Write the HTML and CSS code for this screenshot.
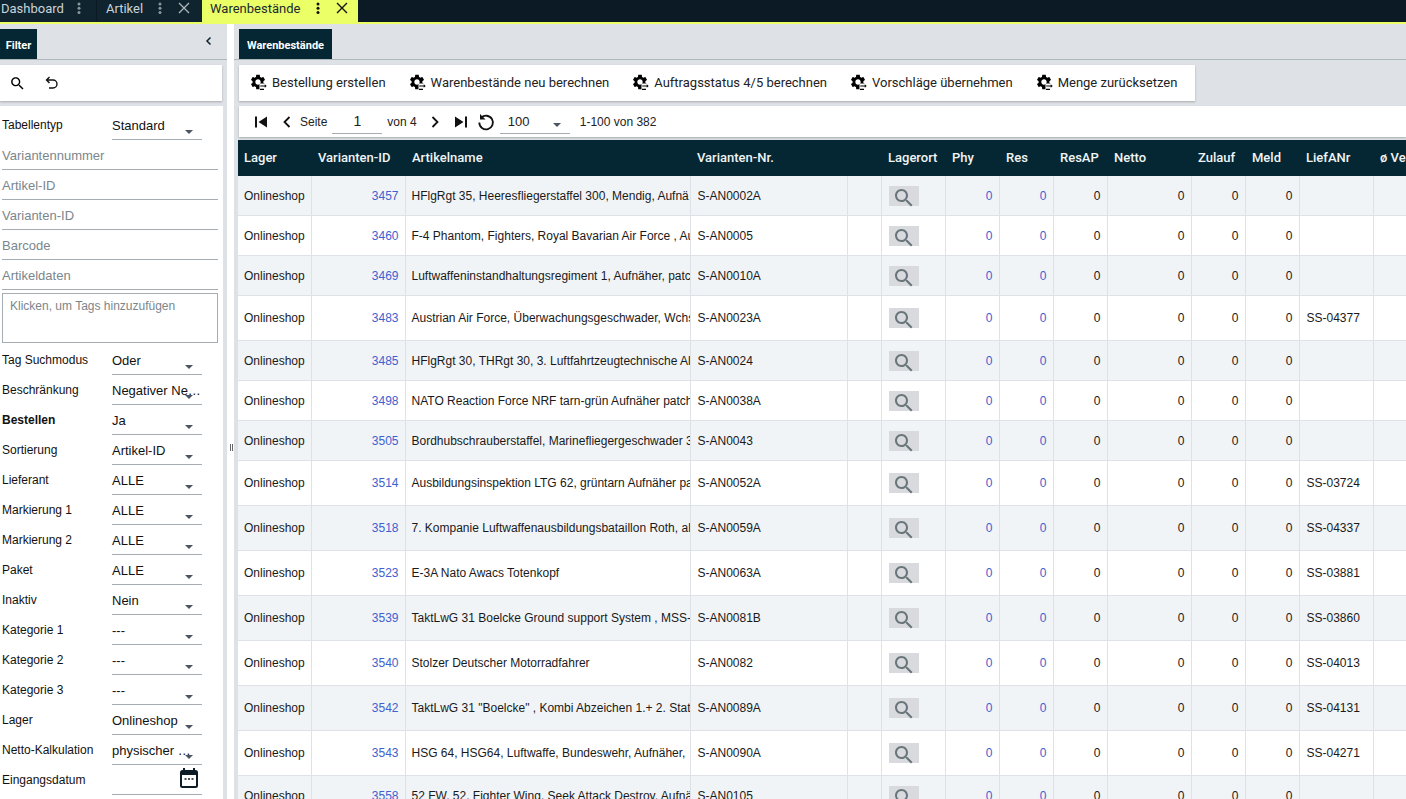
FILE: index.html
```html
<!DOCTYPE html>
<html>
<head>
    <meta name="viewport" content="width=device-width, initial-scale=1">
    <title>Warenbestände</title>
    <link rel="stylesheet" href="styles.css">
</head>

<body>
    <svg class="iconDefs" width="0" height="0">
        <symbol id="gear" viewBox="0 0 24 24">
            <path d="M19.14 12.94c.04-.3.06-.61.06-.94 0-.32-.02-.64-.07-.94l2.03-1.58c.18-.14.23-.41.12-.61l-1.92-3.32c-.12-.22-.37-.29-.59-.22l-2.39.96c-.5-.38-1.03-.7-1.62-.94l-.36-2.54c-.04-.24-.24-.41-.48-.41h-3.84c-.24 0-.43.17-.47.41l-.36 2.54c-.59.24-1.13.57-1.62.94l-2.39-.96c-.22-.08-.47 0-.59.22L2.74 8.87c-.12.21-.08.47.12.61l2.03 1.58c-.05.3-.09.63-.09.94s.02.64.07.94l-2.03 1.58c-.18.14-.23.41-.12.61l1.92 3.32c.12.22.37.29.59.22l2.39-.96c.5.38 1.03.7 1.62.94l.36 2.54c.05.24.24.41.48.41h3.84c.24 0 .44-.17.47-.41l.36-2.54c.59-.24 1.13-.56 1.62-.94l2.39.96c.22.08.47 0 .59-.22l1.92-3.32c.12-.22.07-.47-.12-.61l-2.01-1.58zM12 15.6c-1.98 0-3.6-1.62-3.6-3.6s1.62-3.6 3.6-3.6 3.6 1.62 3.6 3.6-1.62 3.6-3.6 3.6z" />
            <rect x="14" y="14" width="10" height="10" fill="#fff" />
            <path d="M15 16.5h6v-1.6l2.6 2.4-2.6 2.4v-1.6h-6zM14.5 21h5.5v1.5h-5.5z" />
        </symbol>
        <symbol id="lens" viewBox="0 0 24 24">
            <path d="M15.5 14h-.79l-.28-.27C15.41 12.59 16 11.11 16 9.5 16 5.91 13.09 3 9.5 3S3 5.91 3 9.5 5.91 16 9.5 16c1.61 0 3.09-.59 4.23-1.57l.27.28v.79l5 4.99L20.49 19l-4.99-5zm-6 0C7.01 14 5 11.99 5 9.5S7.01 5 9.5 5 14 7.01 14 9.5 11.99 14 9.5 14z" />
        </symbol>
        <symbol id="cross" viewBox="0 0 12 12">
            <path d="M1 1l10 10M11 1 1 11" fill="none" stroke="currentColor" stroke-width="1.4" />
        </symbol>
        <symbol id="kebab" viewBox="0 0 10 14">
            <circle cx="5" cy="3" r="1.5" />
            <circle cx="5" cy="7.2" r="1.5" />
            <circle cx="5" cy="11.4" r="1.5" />
        </symbol>
    </svg>

    <div class="tabBar">
        <div class="appTab firstTab"><span>Dashboard</span><svg class="dots" width="10" height="14"><use href="#kebab" /></svg></div>
        <div class="appTab secondTab"><span>Artikel</span><svg class="dots" width="10" height="14"><use href="#kebab" /></svg><svg class="closeX" width="12" height="12"><use href="#cross" /></svg></div>
        <div class="appTab activeTab"><span>Warenbestände</span><svg class="dots" width="10" height="14"><use href="#kebab" /></svg><svg class="closeX" width="12" height="12"><use href="#cross" /></svg></div>
    </div>

    <div class="workArea">
        <aside class="filterPanel">
            <div class="panelHead">
                <div class="panelTab">Filter</div>
                <svg class="collapseIcon" width="10" height="10" viewBox="0 0 10 10"><path d="M6.5 1.5 3 5l3.5 3.5" fill="none" stroke="#0d2430" stroke-width="1.5" /></svg>
            </div>
            <div class="filterTools">
                <svg class="toolIcon" width="17" height="17"><use href="#lens" /></svg>
                <svg class="toolIcon" width="16" height="16" viewBox="0 0 16 16"><path d="M4 5h6a3.5 3.5 0 0 1 0 8H6M6.5 2 3.5 5l3 3" fill="none" stroke="#111" stroke-width="1.4" /></svg>
            </div>
            <div class="filterForm">
                <div class="formRow"><label>Tabellentyp</label><div class="pick"><span class="pickText">Standard</span><i class="arrow"></i></div></div>
                <div class="textField">Variantennummer</div>
                <div class="textField">Artikel-ID</div>
                <div class="textField">Varianten-ID</div>
                <div class="textField">Barcode</div>
                <div class="textField">Artikeldaten</div>
                <div class="tagBox">Klicken, um Tags hinzuzufügen</div>
                <div class="formRow"><label>Tag Suchmodus</label><div class="pick"><span class="pickText">Oder</span><i class="arrow"></i></div></div>
                <div class="formRow"><label>Beschränkung</label><div class="pick"><span class="pickText">Negativer Ne…</span><i class="arrow"></i></div></div>
                <div class="formRow"><label class="strong">Bestellen</label><div class="pick"><span class="pickText">Ja</span><i class="arrow"></i></div></div>
                <div class="formRow"><label>Sortierung</label><div class="pick"><span class="pickText">Artikel-ID</span><i class="arrow"></i></div></div>
                <div class="formRow"><label>Lieferant</label><div class="pick"><span class="pickText">ALLE</span><i class="arrow"></i></div></div>
                <div class="formRow"><label>Markierung 1</label><div class="pick"><span class="pickText">ALLE</span><i class="arrow"></i></div></div>
                <div class="formRow"><label>Markierung 2</label><div class="pick"><span class="pickText">ALLE</span><i class="arrow"></i></div></div>
                <div class="formRow"><label>Paket</label><div class="pick"><span class="pickText">ALLE</span><i class="arrow"></i></div></div>
                <div class="formRow"><label>Inaktiv</label><div class="pick"><span class="pickText">Nein</span><i class="arrow"></i></div></div>
                <div class="formRow"><label>Kategorie 1</label><div class="pick"><span class="pickText">---</span><i class="arrow"></i></div></div>
                <div class="formRow"><label>Kategorie 2</label><div class="pick"><span class="pickText">---</span><i class="arrow"></i></div></div>
                <div class="formRow"><label>Kategorie 3</label><div class="pick"><span class="pickText">---</span><i class="arrow"></i></div></div>
                <div class="formRow"><label>Lager</label><div class="pick"><span class="pickText">Onlineshop</span><i class="arrow"></i></div></div>
                <div class="formRow"><label>Netto-Kalkulation</label><div class="pick"><span class="pickText">physischer …</span><i class="arrow"></i></div></div>
                <div class="formRow"><label>Eingangsdatum</label><div class="pick">
                    <svg class="calIcon" width="20" height="22" viewBox="0 0 20 22"><path d="M5 1v4M15 1v4" stroke="#0d1b26" stroke-width="2" /><rect x="2" y="4" width="16" height="16" rx="1.5" fill="none" stroke="#0d1b26" stroke-width="2" /><rect x="2" y="4" width="16" height="4" fill="#0d1b26" /><path d="M5.5 12h2M9 12h2M12.5 12h2" stroke="#0d1b26" stroke-width="1.5" /></svg>
                </div></div>
            </div>
        </aside>
        <div class="splitter"><span class="grip"></span></div>

        <main class="mainPanel">
            <div class="panelHead">
                <div class="panelTab mainTab">Warenbestände</div>
            </div>
            <div class="actionBar">
                <button type="button" class="actionBtn"><svg width="18" height="18"><use href="#gear" /></svg>Bestellung erstellen</button>
                <button type="button" class="actionBtn"><svg width="18" height="18"><use href="#gear" /></svg>Warenbestände neu berechnen</button>
                <button type="button" class="actionBtn"><svg width="18" height="18"><use href="#gear" /></svg>Auftragsstatus 4/5 berechnen</button>
                <button type="button" class="actionBtn"><svg width="18" height="18"><use href="#gear" /></svg>Vorschläge übernehmen</button>
                <button type="button" class="actionBtn"><svg width="18" height="18"><use href="#gear" /></svg>Menge zurücksetzen</button>
            </div>
            <div class="pagerBar">
                <svg class="firstIcon" width="14" height="14" viewBox="0 0 14 14"><path d="M1 1.5h2v11H1zM13 1.5v11L4.5 7z" fill="#111" /></svg>
                <svg class="prevIcon" width="10" height="14" viewBox="0 0 10 14"><path d="M7.5 2 2.5 7l5 5" fill="none" stroke="#111" stroke-width="1.8" /></svg>
                <span class="pageWord">Seite</span>
                <span class="pageInput">1</span>
                <span class="pageOf">von 4</span>
                <svg class="nextIcon" width="10" height="14" viewBox="0 0 10 14"><path d="M2.5 2l5 5-5 5" fill="none" stroke="#111" stroke-width="1.8" /></svg>
                <svg class="lastIcon" width="14" height="14" viewBox="0 0 14 14"><path d="M1 1.5v11L9.5 7zM11 1.5h2v11h-2z" fill="#111" /></svg>
                <svg class="reloadIcon" width="18" height="18" viewBox="0 0 18 18"><path d="M4.2 4.8A6.8 6.8 0 1 1 2.3 9.5" fill="none" stroke="#111" stroke-width="1.8" /><path d="M3 1v5.5h5.5z" fill="#111" /></svg>
                <div class="pick sizePick"><span class="pickText">100</span><i class="arrow"></i></div>
                <span class="pageCount">1-100 von 382</span>
            </div>

            <table class="stockTable">
                <colgroup>
                    <col class="w73"><col class="w94"><col class="w285"><col class="w157"><col class="w34"><col class="w64"><col class="w54"><col class="w54"><col class="w54"><col class="w84"><col class="w54"><col class="w54"><col class="w74"><col class="w60">
                </colgroup>
                <thead>
                    <tr><th>Lager</th><th>Varianten-ID</th><th>Artikelname</th><th>Varianten-Nr.</th><th></th><th>Lagerort</th><th>Phy</th><th>Res</th><th>ResAP</th><th>Netto</th><th>Zulauf</th><th>Meld</th><th>LiefANr</th><th>ø Ve</th></tr>
                </thead>
                <tbody>
                    <tr><td>Onlineshop</td><td class="num link">3457</td><td>HFlgRgt 35, Heeresfliegerstaffel 300, Mendig, Aufnä</td><td>S-AN0002A</td><td></td><td><span class="lookBtn"><svg width="24" height="24"><use href="#lens" /></svg></span></td><td class="num link">0</td><td class="num link">0</td><td class="num">0</td><td class="num">0</td><td class="num">0</td><td class="num">0</td><td></td><td></td></tr>
                    <tr><td>Onlineshop</td><td class="num link">3460</td><td>F-4 Phantom, Fighters, Royal Bavarian Air Force , Au</td><td>S-AN0005</td><td></td><td><span class="lookBtn"><svg width="24" height="24"><use href="#lens" /></svg></span></td><td class="num link">0</td><td class="num link">0</td><td class="num">0</td><td class="num">0</td><td class="num">0</td><td class="num">0</td><td></td><td></td></tr>
                    <tr><td>Onlineshop</td><td class="num link">3469</td><td>Luftwaffeninstandhaltungsregiment 1, Aufnäher, patc</td><td>S-AN0010A</td><td></td><td><span class="lookBtn"><svg width="24" height="24"><use href="#lens" /></svg></span></td><td class="num link">0</td><td class="num link">0</td><td class="num">0</td><td class="num">0</td><td class="num">0</td><td class="num">0</td><td></td><td></td></tr>
                    <tr class="tallRow"><td>Onlineshop</td><td class="num link">3483</td><td>Austrian Air Force, Überwachungsgeschwader, Wchs</td><td>S-AN0023A</td><td></td><td><span class="lookBtn"><svg width="24" height="24"><use href="#lens" /></svg></span></td><td class="num link">0</td><td class="num link">0</td><td class="num">0</td><td class="num">0</td><td class="num">0</td><td class="num">0</td><td>SS-04377</td><td></td></tr>
                    <tr><td>Onlineshop</td><td class="num link">3485</td><td>HFlgRgt 30, THRgt 30, 3. Luftfahrtzeugtechnische Al</td><td>S-AN0024</td><td></td><td><span class="lookBtn"><svg width="24" height="24"><use href="#lens" /></svg></span></td><td class="num link">0</td><td class="num link">0</td><td class="num">0</td><td class="num">0</td><td class="num">0</td><td class="num">0</td><td></td><td></td></tr>
                    <tr><td>Onlineshop</td><td class="num link">3498</td><td>NATO Reaction Force NRF tarn-grün Aufnäher patch</td><td>S-AN0038A</td><td></td><td><span class="lookBtn"><svg width="24" height="24"><use href="#lens" /></svg></span></td><td class="num link">0</td><td class="num link">0</td><td class="num">0</td><td class="num">0</td><td class="num">0</td><td class="num">0</td><td></td><td></td></tr>
                    <tr><td>Onlineshop</td><td class="num link">3505</td><td>Bordhubschrauberstaffel, Marinefliegergeschwader 3</td><td>S-AN0043</td><td></td><td><span class="lookBtn"><svg width="24" height="24"><use href="#lens" /></svg></span></td><td class="num link">0</td><td class="num link">0</td><td class="num">0</td><td class="num">0</td><td class="num">0</td><td class="num">0</td><td></td><td></td></tr>
                    <tr class="tallRow"><td>Onlineshop</td><td class="num link">3514</td><td>Ausbildungsinspektion LTG 62, grüntarn Aufnäher pa</td><td>S-AN0052A</td><td></td><td><span class="lookBtn"><svg width="24" height="24"><use href="#lens" /></svg></span></td><td class="num link">0</td><td class="num link">0</td><td class="num">0</td><td class="num">0</td><td class="num">0</td><td class="num">0</td><td>SS-03724</td><td></td></tr>
                    <tr class="tallRow"><td>Onlineshop</td><td class="num link">3518</td><td>7. Kompanie Luftwaffenausbildungsbataillon Roth, al</td><td>S-AN0059A</td><td></td><td><span class="lookBtn"><svg width="24" height="24"><use href="#lens" /></svg></span></td><td class="num link">0</td><td class="num link">0</td><td class="num">0</td><td class="num">0</td><td class="num">0</td><td class="num">0</td><td>SS-04337</td><td></td></tr>
                    <tr class="tallRow"><td>Onlineshop</td><td class="num link">3523</td><td>E-3A Nato Awacs Totenkopf</td><td>S-AN0063A</td><td></td><td><span class="lookBtn"><svg width="24" height="24"><use href="#lens" /></svg></span></td><td class="num link">0</td><td class="num link">0</td><td class="num">0</td><td class="num">0</td><td class="num">0</td><td class="num">0</td><td>SS-03881</td><td></td></tr>
                    <tr class="tallRow"><td>Onlineshop</td><td class="num link">3539</td><td>TaktLwG 31 Boelcke Ground support System , MSS-</td><td>S-AN0081B</td><td></td><td><span class="lookBtn"><svg width="24" height="24"><use href="#lens" /></svg></span></td><td class="num link">0</td><td class="num link">0</td><td class="num">0</td><td class="num">0</td><td class="num">0</td><td class="num">0</td><td>SS-03860</td><td></td></tr>
                    <tr class="tallRow"><td>Onlineshop</td><td class="num link">3540</td><td>Stolzer Deutscher Motorradfahrer</td><td>S-AN0082</td><td></td><td><span class="lookBtn"><svg width="24" height="24"><use href="#lens" /></svg></span></td><td class="num link">0</td><td class="num link">0</td><td class="num">0</td><td class="num">0</td><td class="num">0</td><td class="num">0</td><td>SS-04013</td><td></td></tr>
                    <tr class="tallRow"><td>Onlineshop</td><td class="num link">3542</td><td>TaktLwG 31 "Boelcke" , Kombi Abzeichen 1.+ 2. Stat</td><td>S-AN0089A</td><td></td><td><span class="lookBtn"><svg width="24" height="24"><use href="#lens" /></svg></span></td><td class="num link">0</td><td class="num link">0</td><td class="num">0</td><td class="num">0</td><td class="num">0</td><td class="num">0</td><td>SS-04131</td><td></td></tr>
                    <tr class="tallRow"><td>Onlineshop</td><td class="num link">3543</td><td>HSG 64, HSG64, Luftwaffe, Bundeswehr, Aufnäher,</td><td>S-AN0090A</td><td></td><td><span class="lookBtn"><svg width="24" height="24"><use href="#lens" /></svg></span></td><td class="num link">0</td><td class="num link">0</td><td class="num">0</td><td class="num">0</td><td class="num">0</td><td class="num">0</td><td>SS-04271</td><td></td></tr>
                    <tr><td>Onlineshop</td><td class="num link">3558</td><td>52 FW, 52, Fighter Wing, Seek Attack Destroy, Aufnä</td><td>S-AN0105</td><td></td><td><span class="lookBtn"><svg width="24" height="24"><use href="#lens" /></svg></span></td><td class="num link">0</td><td class="num link">0</td><td class="num">0</td><td class="num">0</td><td class="num">0</td><td class="num">0</td><td></td><td></td></tr>
                </tbody>
            </table>
        </main>
    </div>
</body>
</html>
```

FILE: styles.css
```css
html, body {
    margin: 0;
    height: 799px;
    overflow: hidden;
}

body {
    background: #fff;
    color: #111;
    font-family: "Liberation Sans", Arial, sans-serif;
    font-size: 12px;
}

.iconDefs {
    position: absolute;
}

/* top tabs */
.tabBar {
    display: flex;
    height: 22px;
    background: #0b1a24;
    border-bottom: 2px solid #ebff66;
    font-family: Roboto, sans-serif;
    font-size: 13px;
}

.appTab {
    display: flex;
    align-items: center;
    height: 22px;
    padding-bottom: 6px;
    background: #10242f;
    color: #c9d3d8;
    box-sizing: border-box;
}

.firstTab {
    width: 96px;
    padding-left: 1px;
    margin-right: 1px;
}

.firstTab .dots {
    margin-left: 10px;
}

.secondTab {
    width: 105px;
    padding-left: 9px;
}

.secondTab .dots {
    margin-left: 12px;
}

.activeTab {
    width: 156px;
    padding-left: 8px;
    background: #ebff66;
    color: #1a2a30;
}

.activeTab .dots {
    margin-left: 13px;
    fill: #111;
}

.dots {
    fill: #8a989e;
}

.closeX {
    margin-left: 13px;
    color: #a9b5ba;
}

.activeTab .closeX {
    color: #111;
}

/* layout */
.workArea {
    display: flex;
    height: 775px;
}

.filterPanel {
    width: 227px;
    flex: none;
    background: #dee2e6;
    height: 775px;
    overflow: hidden;
}

.splitter {
    width: 7px;
    flex: none;
    position: relative;
    background: #fff;
}

.grip {
    position: absolute;
    left: 3px;
    top: 420px;
    width: 1px;
    height: 7px;
    border-left: 1px solid #666;
    border-right: 1px solid #666;
}

.mainPanel {
    flex: 1;
    min-width: 0;
    background: #dee2e6;
    overflow: hidden;
}

.panelHead {
    display: flex;
    justify-content: space-between;
    align-items: flex-start;
    height: 36px;
    border-bottom: 1px solid #aeb7bb;
    box-sizing: border-box;
}

.panelTab {
    margin-top: 5px;
    height: 30px;
    width: 37px;
    line-height: 33px;
    background: #052734;
    color: #fff;
    font-family: Roboto, sans-serif;
    font-size: 11px;
    font-weight: 700;
    text-align: center;
}

.mainTab {
    width: 93px;
    margin-left: 5px;
}

.collapseIcon {
    margin: 12px 13px 0 0;
}

/* filter */
.filterTools {
    display: flex;
    align-items: center;
    gap: 17px;
    width: 222px;
    height: 36px;
    margin-top: 5px;
    padding-left: 9px;
    box-sizing: border-box;
    background: #fff;
    box-shadow: 0 1px 2px rgba(0, 0, 0, 0.25);
}

.filterForm {
    width: 223px;
    height: 700px;
    margin-top: 5px;
    padding: 4px 5px 0 2px;
    box-sizing: border-box;
    background: #fff;
}

.formRow {
    display: flex;
    height: 30px;
}

.formRow label {
    width: 110px;
    padding-top: 8px;
    color: #111;
    white-space: nowrap;
}

.formRow .strong {
    font-weight: 700;
}

.pick {
    position: relative;
    width: 90px;
    height: 30px;
    box-sizing: border-box;
    border-bottom: 1px solid #a5adb2;
    font-size: 13px;
    line-height: 32px;
}

.pickText {
    display: block;
    white-space: nowrap;
}

.arrow {
    position: absolute;
    right: 9px;
    top: 20px;
    border: 4px solid transparent;
    border-top: 4px solid #4c5560;
    border-bottom: 0;
}

.calIcon {
    position: absolute;
    right: 3px;
    top: 2px;
}

.textField {
    height: 30px;
    width: 216px;
    line-height: 31px;
    box-sizing: border-box;
    border-bottom: 1px solid #a5adb2;
    font-size: 13px;
    color: #7b868c;
}

.tagBox {
    width: 216px;
    height: 50px;
    margin: 3px 0 2px;
    padding: 5px 7px;
    box-sizing: border-box;
    border: 1px solid #a5adb2;
    color: #7b868c;
}

/* toolbar */
.actionBar {
    display: flex;
    align-items: center;
    gap: 22px;
    width: 956px;
    height: 36px;
    margin: 5px 0 0 5px;
    padding: 0 0 2px 10px;
    box-sizing: border-box;
    background: #fff;
    box-shadow: 0 1px 2px rgba(0, 0, 0, 0.25);
}

.actionBtn {
    display: flex;
    align-items: center;
    gap: 5px;
    padding: 0;
    border: 0;
    background: none;
    color: #222;
    font-family: Roboto, sans-serif;
    font-size: 13px;
}

.pagerBar {
    display: flex;
    align-items: center;
    height: 31px;
    margin: 5px 0 0 5px;
    padding-top: 1px;
    box-sizing: border-box;
    background: #fff;
    box-shadow: 0 1px 2px rgba(0, 0, 0, 0.25);
    color: #222;
}

.firstIcon {
    margin-left: 15px;
}

.prevIcon {
    margin-left: 14px;
}

.pageWord {
    margin-left: 8px;
}

.pageInput {
    align-self: flex-start;
    width: 50px;
    margin: -1px 0 0 5px;
    height: 28px;
    line-height: 30px;
    box-sizing: border-box;
    border-bottom: 1px solid #a5adb2;
    text-align: center;
    font-size: 14px;
}

.pageOf {
    margin-left: 5px;
}

.nextIcon {
    margin-left: 13px;
}

.lastIcon {
    margin-left: 14px;
}

.reloadIcon {
    margin-left: 9px;
}

.sizePick {
    align-self: flex-start;
    margin: -1px 0 0 5px;
    width: 70px;
    height: 28px;
    padding-left: 8px;
    line-height: 32px;
}

.sizePick .arrow {
    top: 17px;
}

.pageCount {
    margin-left: 10px;
}

/* table */
.stockTable {
    table-layout: fixed;
    width: 1189px;
    margin: 3px 0 0 4px;
    border-collapse: collapse;
    background: #fff;
}

.w73 { width: 73px; }
.w94 { width: 94px; }
.w285 { width: 285px; }
.w157 { width: 157px; }
.w34 { width: 34px; }
.w64 { width: 64px; }
.w54 { width: 54px; }
.w84 { width: 84px; }
.w74 { width: 74px; }
.w60 { width: 60px; }

.stockTable th {
    height: 36px;
    padding: 0 6px 2px 7px;
    box-sizing: border-box;
    background: #052734;
    color: #f0f4f5;
    font-family: Roboto, sans-serif;
    font-size: 13px;
    font-weight: 500;
    text-align: left;
    white-space: nowrap;
    overflow: hidden;
}

.stockTable th:first-child {
    padding-left: 6px;
}

.stockTable td {
    height: 40px;
    padding: 1px 6px 0;
    box-sizing: border-box;
    border: 1px solid #dee2e6;
    border-top: 0;
    color: #1a1a1a;
    white-space: nowrap;
    overflow: hidden;
}

.stockTable td:nth-child(4),
.stockTable td:nth-child(6),
.stockTable td:nth-child(13) {
    padding-left: 7px;
}

.stockTable td:nth-child(3) {
    padding-right: 0;
}

.stockTable td:first-child {
    border-left: 0;
}

.stockTable tbody tr:first-child td {
    height: 39px;
}

.stockTable tr.tallRow td {
    height: 45px;
}

.stockTable tbody tr:nth-child(odd) {
    background: #f1f4f7;
}

.stockTable .num {
    text-align: right;
}

.stockTable .link {
    color: #4061cf;
}

.lookBtn {
    display: block;
    width: 30px;
    height: 20px;
    background: #d8dadd;
    fill: #68757b;
}

.lookBtn svg {
    display: block;
    margin: 0 auto;
}
```
